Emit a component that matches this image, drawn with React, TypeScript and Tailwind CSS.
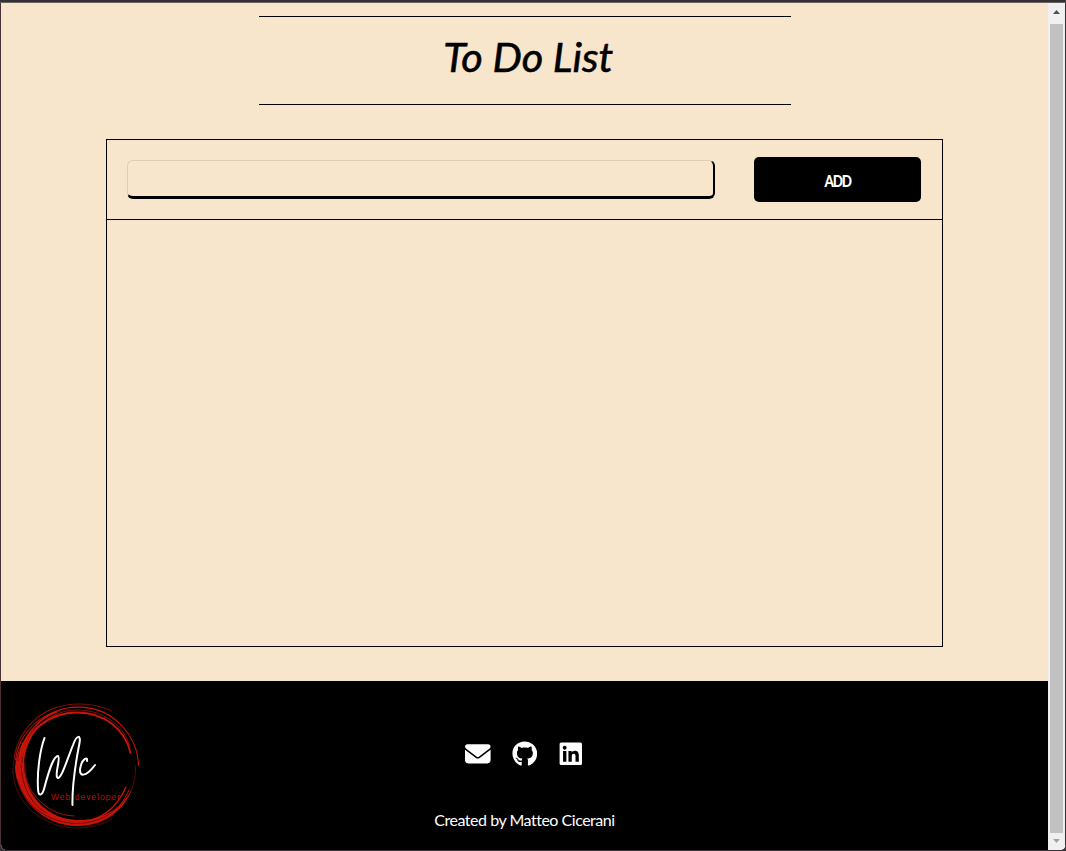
import React from "react";
import { FaEnvelope, FaGithub, FaLinkedin } from "react-icons/fa6";

function Logo() {
  return (
    <svg viewBox="0 0 130 130" className="h-[130px] w-[130px]" fill="none" strokeLinecap="round">
      <g transform="translate(0 -1)">
        <path
          d="M3 66C4 98 32 125 65 125C92 125 112 109 120 88C108 109 90 119.500 65 119C37 118 14 97 12 66C12 45 22 27 38 17C17 27 5 45 3 66Z"
          fill="#c8140a"
        />
        <g stroke="#000" strokeWidth="0.6" opacity="0.7">
          <path d="M6 60C7 38 20 23 36 16" />
          <path d="M10 62C10 42 20 27 36 17" />
          <path d="M5 78C12 105 37 122 65 122.500C89 122 107 110 117 92" />
          <path d="M9 64C10 86 19 103 34 112" />
        </g>
        <g stroke="#c8140a">
          <path d="M99 9.500C67-4 28 3 10 34C6 41 3 49 2 57" strokeWidth="0.9" opacity="0.7" />
          <path d="M0.800 72C1 45 16 15 45 6" strokeWidth="0.8" strokeDasharray="2 1" opacity="0.55" />
          <path d="M1 70C2 103 31 127 65 127C77 127 90 124 100 118" strokeWidth="0.7" opacity="0.6" />
          <path d="M3.500 59C6 37 22 17 45 10" strokeWidth="1" />
          <path d="M7 59C9 36 27 17 45 11" strokeWidth="1.2" />
          <path d="M10 55C15 29 38 11.500 65 11.500C92 11.500 113 28 118.500 52" strokeWidth="1.8" />
          <path d="M22 31C33 17 47 9 65 9C91 9 112 24 118 46" strokeWidth="0.8" opacity="0.8" />
          <path d="M24 24C49-1 88 1 110 25C121 37 126 50 126.500 64" strokeWidth="1.1" />
          <path d="M123.500 65C124 82 118 98 106 109C100 115 94 119 86 122" strokeWidth="0.7" opacity="0.65" />
          <path d="M65 121C88 121 105 107 114 86" strokeWidth="1.3" />
          <path d="M65 124C90 124 108 110 117 89" strokeWidth="1" />
          <path d="M13 62C10 88 33 114 62 115" strokeWidth="0.8" />
        </g>
      </g>
      <text x="39" y="98" fill="#b5100c" className="font-['Liberation_Sans',sans-serif] text-[8.5px]" textLength="69" lengthAdjust="spacing">Web developer</text>
      <g stroke="#fff" strokeWidth="2" strokeLinejoin="round">
        <path d="M32.500 36C28 48 25 69 26 86C26 95 30 94 32 87C36 72 41 54 46 54C49 55 43 71 45 75C48 81 55 58 61 43C65 32 69 33 67.500 41C64 59 60 86 60.500 103" />
        <path d="M75 59C76 54 70 57 68.500 65C66 76 74 75 83 63" />
      </g>
    </svg>
  );
}

export default function App() {
  return (
    <div className="flex h-[851px] w-full flex-col overflow-hidden bg-[#353135] font-[Lato,sans-serif]">
      <div className="h-[3px] shrink-0 border-b border-[#68635f] bg-[#353135]" />
      <div className="flex h-[847px] overflow-hidden rounded-b-md border-l border-[#4b3036] bg-[#f0f0f0]">
        <div className="flex w-[1047px] flex-col bg-[#f7e6cc]">
          <header className="ml-[258px] mt-[13px] flex h-[89px] w-[532px] justify-center border-y border-black">
            <h1 className="mt-[12px] h-[55px] origin-center scale-x-[1.01] whitespace-nowrap pl-[7px] text-[41px] leading-[55px] italic text-black [-webkit-text-stroke:0.6px_#000]">To Do List</h1>
          </header>
          <main className="ml-[105px] mt-[34px] h-[508px] w-[837px] border border-black">
            <form className="flex h-[80px] items-start border-b border-black pl-5 pt-[17px]" onSubmit={(e) => e.preventDefault()}>
              <input aria-label="New item" className="mt-[3px] h-[39px] w-[588px] rounded-md border border-b-[3px] border-r-2 border-[#dfceb6] border-b-black border-r-black bg-transparent px-3 outline-none" />
              <button className="ml-[39px] h-[45px] w-[167px] rounded-[5px] bg-black pt-[3px] text-white">
                <span className="inline-block scale-x-[0.84] text-[16px] font-black tracking-[-1.5px]">ADD</span>
              </button>
            </form>
          </main>
          <footer className="mt-[34px] flex h-[169px] bg-black">
            <div className="ml-[11px] mt-[21px] w-[130px]"><Logo /></div>
            <div className="ml-[263px] flex w-[239px] flex-col items-center pt-[60px] text-white">
              <div className="flex gap-[21px] text-[25.6px]">
                <FaEnvelope />
                <FaGithub />
                <FaLinkedin />
              </div>
              <p className="mt-[41.4px] whitespace-nowrap text-[16px] leading-6 tracking-[-0.48px]">Created by Matteo Cicerani</p>
            </div>
          </footer>
        </div>
        <div className="flex w-[17px] flex-col items-center bg-[#f0f0f0]">
          <svg viewBox="0 0 17 21" className="h-[21px] w-[17px] shrink-0"><path d="M5 11h7L8.500 7z" fill="#505050" /></svg>
          <div className="mr-[1px] h-[809px] w-[13px] shrink-0 bg-[#c1c1c1]" />
          <svg viewBox="0 0 17 17" className="h-[17px] w-[17px] shrink-0"><path d="M5 6h7L8.500 10z" fill="#a3a3a3" /></svg>
        </div>
        <div className="w-px bg-[#353135]" />
      </div>
    </div>
  );
}
